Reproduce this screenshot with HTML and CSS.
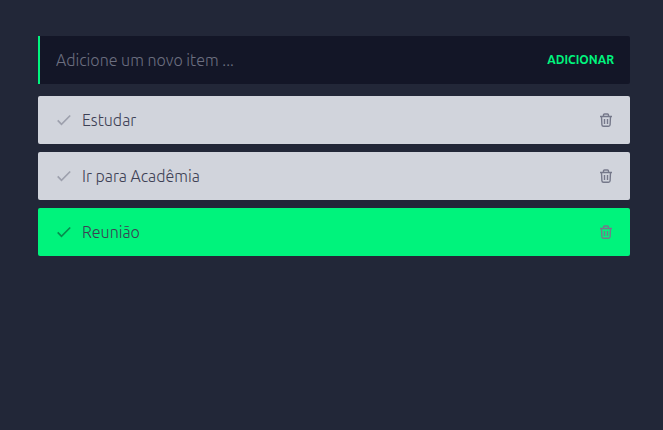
FILE: index.html
```html
<!DOCTYPE html>
<html lang="pt-BR">
<head>
<meta charset="utf-8">
<meta name="viewport" content="width=device-width, initial-scale=1">
<title>Tarefas</title>
<link rel="stylesheet" href="styles.css">
</head>
<body>
<svg class="sprite" aria-hidden="true">
  <symbol id="check" viewBox="0 0 16 16">
    <path d="M1.700 8.300 5.500 12.300 14.200 3.500" fill="none" stroke="currentColor" stroke-width="1.700"/>
  </symbol>
  <symbol id="trash" viewBox="0 0 16 16">
    <path d="M2 4.500h12M5.500 4.500V3q0-1 1-1h3q1 0 1 1v1.500M3.500 4.500l.4 8.300q.1 1.500 1.600 1.500h5q1.500 0 1.600-1.500l.4-8.300M6.500 7v5M9.500 7v5" fill="none" stroke="currentColor" stroke-width="1.400"/>
  </symbol>
</svg>
<main class="todo">
  <form class="new-item">
    <input class="new-item-field" type="text" placeholder="Adicione um novo item ..." aria-label="Novo item">
    <button class="new-item-button" type="button">ADICIONAR</button>
  </form>
  <ul class="items">
    <li class="item">
      <button class="icon-button check" type="button" aria-label="Concluir"><svg class="icon"><use href="#check"/></svg></button>
      <span class="item-text">Estudar</span>
      <button class="icon-button trash" type="button" aria-label="Excluir"><svg class="icon"><use href="#trash"/></svg></button>
    </li>
    <li class="item">
      <button class="icon-button check" type="button" aria-label="Concluir"><svg class="icon"><use href="#check"/></svg></button>
      <span class="item-text">Ir para Acadêmia</span>
      <button class="icon-button trash" type="button" aria-label="Excluir"><svg class="icon"><use href="#trash"/></svg></button>
    </li>
    <li class="item done">
      <button class="icon-button check" type="button" aria-label="Reabrir"><svg class="icon"><use href="#check"/></svg></button>
      <span class="item-text">Reunião</span>
      <button class="icon-button trash" type="button" aria-label="Excluir"><svg class="icon"><use href="#trash"/></svg></button>
    </li>
  </ul>
</main>
</body>
</html>
```
FILE: styles.css
```css
* {
  box-sizing: border-box;
}

body {
  margin: 0;
  background: #222738;
  font-family: Ubuntu, "Noto Sans", sans-serif;
  font-size: 16px;
  font-weight: 300;
  line-height: 24px;
}

button {
  padding: 0;
  border: 0;
  background: none;
  font: inherit;
  cursor: pointer;
}

.sprite {
  display: none;
}

.todo {
  padding: 36px 33px 36px 38px;
}

.new-item {
  display: flex;
  align-items: center;
  height: 48px;
  margin-bottom: 12px;
  padding: 0 16px;
  border-left: 2px solid #00f47e;
  border-radius: 0 2px 2px 0;
  background: #131627;
}

.new-item-field {
  flex: 1;
  min-width: 0;
  padding: 0;
  border: 0;
  outline: 0;
  background: none;
  color: #d2d5de;
  font: inherit;
}

.new-item-field::placeholder {
  color: #6c6f80;
  opacity: 1;
}

.new-item-button {
  color: #00f47e;
  font-size: 12px;
  font-weight: 700;
}

.items {
  display: grid;
  gap: 8px;
  margin: 0;
  padding: 0;
  list-style: none;
}

.item {
  display: flex;
  align-items: center;
  gap: 10px;
  height: 48px;
  padding: 0 16px 0 18px;
  border-radius: 2px;
  background: #d1d4dc;
  color: #3d4054;
}

.item-text {
  flex: 1;
}

.icon-button {
  display: flex;
}

.icon {
  width: 16px;
  height: 16px;
}

.check {
  color: #9da0ad;
}

.trash {
  color: #75788a;
}

.done {
  background: #00f37c;
}

.done .check {
  color: #078b4d;
}
```
